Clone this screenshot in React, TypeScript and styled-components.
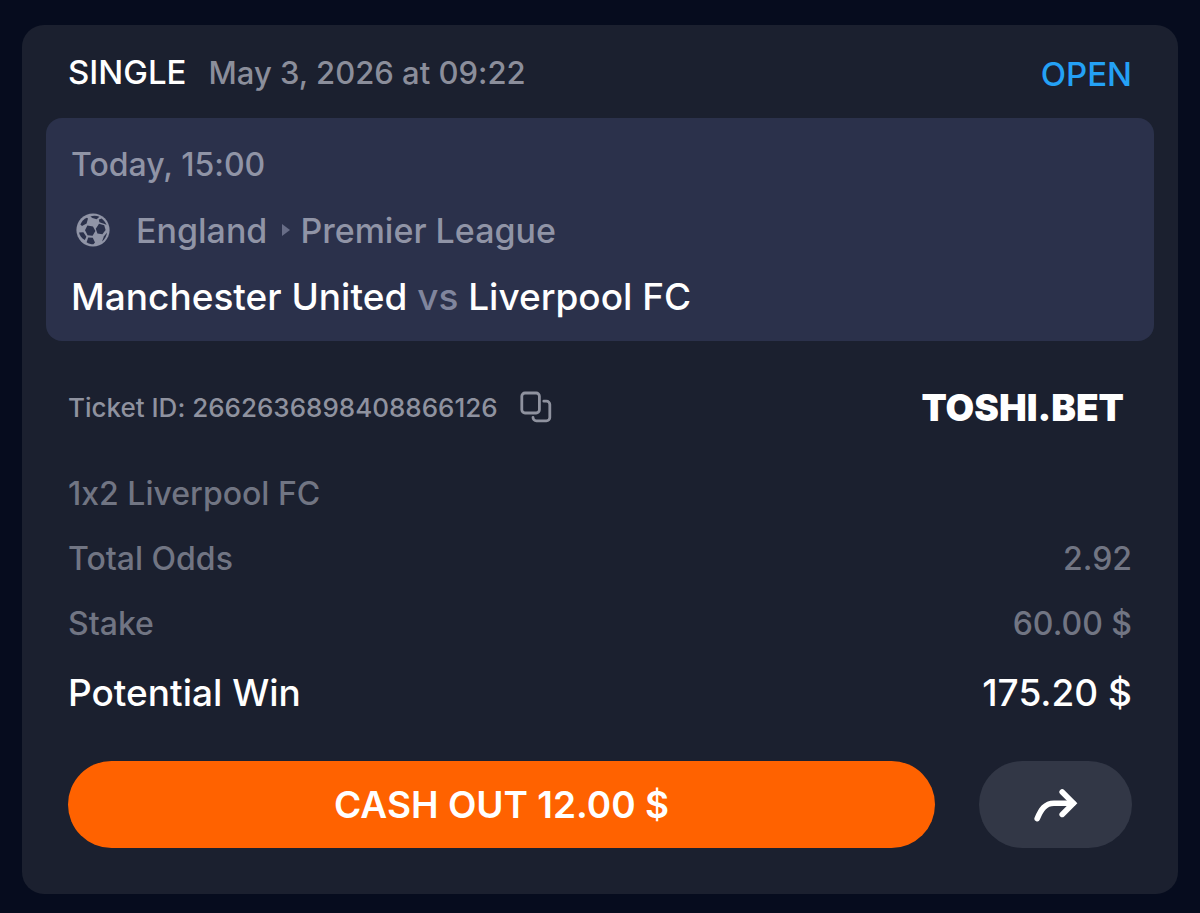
import React from "react";
import styled, { createGlobalStyle } from "styled-components";

const GlobalStyle = createGlobalStyle`
  *, *::before, *::after { box-sizing: border-box; }
  body {
    margin: 0;
    background: #060c1e;
    color: #ffffff;
    font-family: Inter, "Liberation Sans", sans-serif;
    font-weight: 500;
    font-feature-settings: "calt" 0;
  }
  p, h1, h2, dl, dt, dd { margin: 0; font-weight: inherit; }
`;

const Page = styled.main`
  padding: 25px 22px 18px;
`;

const Card = styled.article`
  padding: 0 24px 46px;
  border-radius: 22px;
  background: #1b202f;
`;

const Header = styled.header`
  display: flex;
  justify-content: space-between;
  align-items: center;
  height: 93px;
  padding: 0 22px;
  font-size: 33px;
`;

const BetKind = styled.h1`
  display: flex;
  align-items: baseline;
  gap: 22px;
  font-size: 33px;
`;

const Placed = styled.span`
  font-size: 31px;
  font-weight: 500;
  color: #8b8e9b;
`;

const Status = styled.span`
  padding-top: 4px;
  color: #24a1f5;
`;

const EventPanel = styled.section`
  padding: 13px 25px 12px;
  border-radius: 16px;
  background: #2b314b;
`;

const rowText = {
  normal: "32px",
  league: "34px",
  strong: "37px",
};

const EventRow = styled.p<{ $size?: keyof typeof rowText }>`
  display: flex;
  align-items: center;
  height: 66px;
  font-size: ${(p) => rowText[p.$size ?? "normal"]};
  font-weight: ${(p) => (p.$size === "strong" ? 550 : 500)};
  color: ${(p) => (p.$size === "strong" ? "#ffffff" : "#9094a6")};
  white-space: pre;
`;

const Ball = styled.svg`
  width: 34px;
  height: 34px;
  margin: 0 26px 0 5px;
`;

const Separator = styled.svg`
  width: 8px;
  height: 12px;
  margin: 0 10px 0 15px;
`;

const Versus = styled.span`
  color: #80859d;
`;

const Details = styled.section`
  padding: 12px 22px 0;
`;

const TicketRow = styled.div`
  display: flex;
  justify-content: space-between;
  align-items: center;
  height: 108px;
`;

const Ticket = styled.div`
  display: flex;
  align-items: center;
  gap: 22px;
  font-size: 26px;
  color: #8f929f;
`;

const CopyButton = styled.button`
  display: flex;
  padding: 0;
  border: 0;
  background: none;
  color: inherit;
  cursor: pointer;
`;

const Brand = styled.span`
  padding-right: 8px;
  font-size: 37px;
  font-weight: 900;
`;

const SummaryRow = styled.div<{ $strong?: boolean }>`
  display: flex;
  justify-content: space-between;
  align-items: center;
  height: ${(p) => (p.$strong ? 73 : 65)}px;
  font-size: ${(p) => rowText[p.$strong ? "strong" : "normal"]};
  font-weight: ${(p) => (p.$strong ? 550 : 500)};
  color: ${(p) => (p.$strong ? "#ffffff" : "#717583")};
`;

const Actions = styled.div`
  display: flex;
  gap: 44px;
  padding-top: 32px;
`;

const ActionButton = styled.button<{ $primary?: boolean }>`
  display: flex;
  flex: ${(p) => (p.$primary ? "1" : "0 0 153px")};
  justify-content: center;
  align-items: center;
  height: 87px;
  padding: 0;
  border: 0;
  border-radius: 44px;
  background: ${(p) => (p.$primary ? "#ff6200" : "#323746")};
  color: #ffffff;
  font: inherit;
  font-size: 37px;
  font-weight: 600;
  cursor: pointer;
`;

const BallIcon = () => (
  <Ball viewBox="0 0 34 34" aria-hidden="true">
    <circle cx="17" cy="17" r="16.6" fill="currentColor" />
    <g fill="#2b314b">
      <path d="M11.4 12.6 17 13.4 19.4 18 16.6 22.8 11.6 22.2 9 17.2Z" />
      <path d="M23 10.8 28.2 12.2 29.6 17 26.4 21.2 21.4 20.6 19.8 15.8Z" />
      <path d="M4.4 11.4C6 8 8 6 10.8 4.8L12 5.6 10.6 10.4 6 13Z" />
      <path d="M14.4 3.4C18 2.4 21 2.8 23.4 3.8L20.6 6.2 16.4 5Z" />
      <path d="M22.8 6.4 25.6 5.4C28 7.2 29.6 9.4 30.6 12L28.6 11 23.4 9.2Z" />
      <path d="M3 19.4 7.4 19.2 10.4 23.8 8.8 27C5.4 25 3.8 22.6 3 19.4Z" />
      <path d="M12.2 24.6 16.8 24.8 19 29.4 17.4 31.2C14.8 31.2 12.6 30.6 10.6 29.2Z" />
      <path d="M28 23.2 31 19.4C30.6 23 28.8 26.2 26 28.6Z" />
    </g>
  </Ball>
);

const CopyIcon = () => (
  <svg width="32" height="32" viewBox="0 0 32 32" fill="none" stroke="currentColor" strokeWidth="2.8" strokeLinecap="round" aria-hidden="true">
    <rect x="1.8" y="2" width="17.6" height="20" rx="3.2" />
    <path d="M23.8 10.2H26.4a3.4 3.4 0 0 1 3.4 3.4V26.4a3.4 3.4 0 0 1-3.4 3.4H16.4a3.4 3.4 0 0 1-3.4-3.4" />
  </svg>
);

const ShareIcon = () => (
  <svg width="44" height="34" viewBox="0 0 44 34" fill="none" stroke="currentColor" strokeWidth="5.6" strokeLinecap="round" aria-hidden="true">
    <path d="M3.2 30.6C7 21.5 11 15.2 20 15.2H39" />
    <path d="M28.2 4 39.4 15.2 28.2 26.4" strokeLinejoin="miter" />
  </svg>
);

const rows = [
  { label: "Total Odds", value: "2.92" },
  { label: "Stake", value: "60.00 $" },
  { label: "Potential Win", value: "175.20 $", strong: true },
];

export default function App() {
  return (
    <>
      <GlobalStyle />
      <Page>
        <Card>
          <Header>
            <BetKind>
              SINGLE <Placed>May 3, 2026 at 09:22</Placed>
            </BetKind>
            <Status>OPEN</Status>
          </Header>
          <EventPanel>
            <EventRow>Today, 15:00</EventRow>
            <EventRow $size="league">
              <BallIcon />
              England
              <Separator viewBox="0 0 8 12" aria-hidden="true">
                <path d="M0 0 8 6 0 12Z" fill="#686d87" />
              </Separator>
              Premier League
            </EventRow>
            <EventRow $size="strong">
              Manchester United<Versus> vs </Versus>Liverpool FC
            </EventRow>
          </EventPanel>
          <Details>
            <TicketRow>
              <Ticket>
                Ticket ID: 2662636898408866126
                <CopyButton type="button" aria-label="Copy ticket ID">
                  <CopyIcon />
                </CopyButton>
              </Ticket>
              <Brand>TOSHI.BET</Brand>
            </TicketRow>
            <SummaryRow as="p">1x2 Liverpool FC</SummaryRow>
            <dl>
              {rows.map((row) => (
                <SummaryRow key={row.label} $strong={row.strong}>
                  <dt>{row.label}</dt>
                  <dd>{row.value}</dd>
                </SummaryRow>
              ))}
            </dl>
            <Actions>
              <ActionButton type="button" $primary>
                CASH OUT 12.00 $
              </ActionButton>
              <ActionButton type="button" aria-label="Share bet">
                <ShareIcon />
              </ActionButton>
            </Actions>
          </Details>
        </Card>
      </Page>
    </>
  );
}
